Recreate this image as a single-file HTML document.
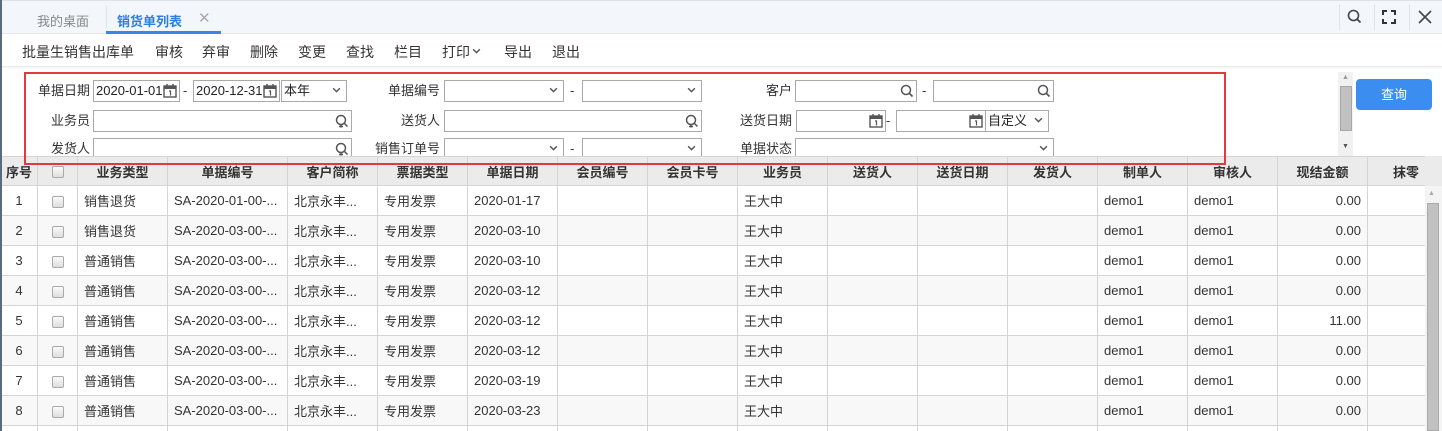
<!DOCTYPE html>
<html><head><meta charset="utf-8"><style>
*{box-sizing:border-box;margin:0;padding:0}
html{width:1442px;height:431px;overflow:hidden}
body{width:1442px;height:431px;overflow:hidden;background:#fff;font-family:"Liberation Sans","Noto Sans CJK SC",sans-serif;font-size:13px;color:#333;position:relative}
.a{position:absolute}
.tabbar{left:0;top:0;width:1442px;height:34px;background:#f3f6fa;border-top:1px solid #dfe3e8;border-bottom:1px solid #e3e6ea}
.tb span{position:absolute;top:42px;font-size:14px;color:#333}
.inp{position:absolute;height:22px;border:1px solid #a9a9a9;background:#fff;font-size:13px;line-height:20px;padding-left:2px;color:#222}
.lbl{position:absolute;font-size:13px;color:#333;text-align:right;line-height:22px}
.dash{position:absolute;font-size:13px;line-height:22px}
.chev{position:absolute;right:5px;top:6px}
.ic{position:absolute;right:2px;top:3px}
.tw{position:absolute;left:0;top:156px;width:1425px;height:275px;overflow:hidden}
table{border-collapse:collapse;table-layout:fixed;width:1425px}
td,th{border:1px solid #d4d4d4;height:30px;font-size:13px;white-space:nowrap;overflow:hidden;padding:0 6px}
th{background:#ebebeb;font-weight:bold;text-align:center;height:29px}
tr:nth-child(odd) td{background:#f8f8f8}
.cb{display:inline-block;width:12px;height:12px;border:1px solid #aaa;border-radius:2px;background:linear-gradient(#fafafa,#ddd);vertical-align:middle}
</style></head><body>
<svg width="0" height="0" style="position:absolute"><defs>
<symbol id="cal" viewBox="0 0 14 14"><rect x="1" y="2" width="12" height="11" fill="none" stroke="#555" stroke-width="1.4"/><rect x="1" y="2" width="12" height="3" fill="#555"/><path d="M4 0v3M10 0v3" stroke="#555" stroke-width="1.4"/><path d="M6 7h1.5v4.5" fill="none" stroke="#555" stroke-width="1.2"/></symbol>
<symbol id="srch" viewBox="0 0 14 14"><circle cx="6" cy="6" r="4.5" fill="none" stroke="#555" stroke-width="1.5"/><path d="M9.5 9.5l3 3" stroke="#555" stroke-width="1.6"/></symbol>
<symbol id="usr" viewBox="0 0 14 14"><circle cx="6" cy="6" r="4.5" fill="none" stroke="#555" stroke-width="1.5"/><path d="M6 10.5v3M4 12.5h4M9.5 9.5l3 3" stroke="#555" stroke-width="1.5"/></symbol>
<symbol id="chv" viewBox="0 0 8 6"><path d="M1 1l3 3 3-3" fill="none" stroke="#555" stroke-width="1.3"/></symbol>
</defs></svg>
<div class="a" style="left:0;top:0;width:2px;height:431px;background:#5a6b80;z-index:5"></div>
<div class="a tabbar"></div>
<div class="a" style="left:37px;top:11px;font-size:13px;color:#888">我的桌面</div>
<div class="a" style="left:106px;top:6px;width:1px;height:22px;background:#e0e0e0"></div>
<div class="a" style="left:117px;top:11px;font-size:13px;color:#2d7ce0;font-weight:bold">销货单列表</div>
<div class="a" style="left:198px;top:9px;font-size:15px;color:#aaa">✕</div>
<div class="a" style="left:106px;top:31px;width:115px;height:3px;background:#3a86e8"></div>
<div class="a" style="left:1339px;top:4px;width:1px;height:26px;background:#e3e3e3"></div>
<div class="a" style="left:1374px;top:4px;width:1px;height:26px;background:#e3e3e3"></div>
<div class="a" style="left:1409px;top:4px;width:1px;height:26px;background:#e3e3e3"></div>
<svg class="a" style="left:1346px;top:8px" width="18" height="18"><circle cx="7.5" cy="7.5" r="5" fill="none" stroke="#444" stroke-width="1.6"/><path d="M11 11l3.5 3.5" stroke="#444" stroke-width="1.8"/></svg>
<svg class="a" style="left:1382px;top:10px" width="14" height="14"><path d="M1 5V1h4M9 1h4v4M13 9v4H9M5 13H1V9" fill="none" stroke="#333" stroke-width="2"/></svg>
<svg class="a" style="left:1417px;top:9px" width="16" height="16"><path d="M2 2l12 12M14 2L2 14" stroke="#444" stroke-width="1.6"/></svg>
<div class="tb">
<span style="left:22px;top:42px">批量生销售出库单</span><span style="left:155px">审核</span><span style="left:202px">弃审</span><span style="left:250px">删除</span><span style="left:298px">变更</span><span style="left:346px">查找</span><span style="left:394px">栏目</span><span style="left:442px">打印<svg width="9" height="7" style="margin-left:2px;vertical-align:2px"><use href="#chv"/></svg></span><span style="left:504px">导出</span><span style="left:552px">退出</span>
</div>
<div class="a" style="left:0;top:66px;width:1442px;height:3px;background:linear-gradient(#e8e8e8,#fff)"></div>

<div class="lbl" style="left:20px;top:80px;width:70px">单据日期</div>
<div class="inp" style="left:93px;top:80px;width:87px">2020-01-01<svg class="ic" width="14" height="14"><use href="#cal"/></svg></div>
<div class="dash" style="left:183px;top:80px">-</div>
<div class="inp" style="left:193px;top:80px;width:87px">2020-12-31<svg class="ic" width="14" height="14"><use href="#cal"/></svg></div>
<div class="inp" style="left:281px;top:80px;width:66px">本年<svg class="chev" width="9" height="7"><use href="#chv"/></svg></div>
<div class="lbl" style="left:370px;top:80px;width:70px">单据编号</div>
<div class="inp" style="left:444px;top:80px;width:120px"><svg class="chev" width="9" height="7"><use href="#chv"/></svg></div>
<div class="dash" style="left:570px;top:80px">-</div>
<div class="inp" style="left:582px;top:80px;width:120px"><svg class="chev" width="9" height="7"><use href="#chv"/></svg></div>
<div class="lbl" style="left:720px;top:80px;width:72px">客户</div>
<div class="inp" style="left:795px;top:80px;width:122px"><svg class="ic" width="14" height="14"><use href="#srch"/></svg></div>
<div class="dash" style="left:922px;top:80px">-</div>
<div class="inp" style="left:933px;top:80px;width:121px"><svg class="ic" width="14" height="14"><use href="#srch"/></svg></div>

<div class="lbl" style="left:20px;top:110px;width:70px">业务员</div>
<div class="inp" style="left:93px;top:110px;width:259px"><svg class="ic" width="14" height="14"><use href="#usr"/></svg></div>
<div class="lbl" style="left:370px;top:110px;width:70px">送货人</div>
<div class="inp" style="left:444px;top:110px;width:258px"><svg class="ic" width="14" height="14"><use href="#usr"/></svg></div>
<div class="lbl" style="left:720px;top:110px;width:72px">送货日期</div>
<div class="inp" style="left:796px;top:110px;width:90px"><svg class="ic" width="14" height="14"><use href="#cal"/></svg></div>
<div class="dash" style="left:886px;top:110px">-</div>
<div class="inp" style="left:896px;top:110px;width:90px"><svg class="ic" width="14" height="14"><use href="#cal"/></svg></div>
<div class="inp" style="left:985px;top:110px;width:64px">自定义<svg class="chev" width="9" height="7"><use href="#chv"/></svg></div>

<div class="lbl" style="left:20px;top:138px;width:70px">发货人</div>
<div class="inp" style="left:93px;top:138px;width:259px"><svg class="ic" width="14" height="14"><use href="#usr"/></svg></div>
<div class="lbl" style="left:360px;top:138px;width:80px">销售订单号</div>
<div class="inp" style="left:444px;top:138px;width:120px"><svg class="chev" width="9" height="7"><use href="#chv"/></svg></div>
<div class="dash" style="left:570px;top:138px">-</div>
<div class="inp" style="left:582px;top:138px;width:120px"><svg class="chev" width="9" height="7"><use href="#chv"/></svg></div>
<div class="lbl" style="left:720px;top:138px;width:72px">单据状态</div>
<div class="inp" style="left:795px;top:138px;width:259px"><svg class="chev" width="9" height="7"><use href="#chv"/></svg></div>

<div class="a" style="left:1338px;top:72px;width:15px;height:84px;background:#f1f1f1"></div>
<div class="a" style="left:1340px;top:86px;width:12px;height:45px;background:#c1c1c1;border:1px solid #a8a8a8"></div>
<div class="a" style="left:1342px;top:74px;font-size:7px;color:#999">▲</div>
<div class="a" style="left:1342px;top:143px;font-size:7px;color:#555">▼</div>
<div class="a" style="left:1356px;top:79px;width:76px;height:31px;background:#3b8ef0;border-radius:4px;color:#fff;text-align:center;line-height:31px;font-size:13px">查询</div>

<div class="tw"><table>
<colgroup><col style="width:37px"><col style="width:40px"><col style="width:90px"><col style="width:120px"><col style="width:90px"><col style="width:90px"><col style="width:90px"><col style="width:90px"><col style="width:90px"><col style="width:90px"><col style="width:90px"><col style="width:90px"><col style="width:90px"><col style="width:90px"><col style="width:90px"><col style="width:90px"><col style="width:58px"></colgroup>
<tr><th style="padding:0">序号</th><th><span class="cb"></span></th><th>业务类型</th><th>单据编号</th><th>客户简称</th><th>票据类型</th><th>单据日期</th><th>会员编号</th><th>会员卡号</th><th>业务员</th><th>送货人</th><th>送货日期</th><th>发货人</th><th>制单人</th><th>审核人</th><th>现结金额</th><th style="text-align:right">抹零</th></tr>
<tr><td style="text-align:center">1</td><td style="text-align:center"><span class="cb"></span></td><td>销售退货</td><td>SA-2020-01-00-...</td><td>北京永丰...</td><td>专用发票</td><td>2020-01-17</td><td></td><td></td><td>王大中</td><td></td><td></td><td></td><td>demo1</td><td>demo1</td><td style="text-align:right">0.00</td><td></td></tr>
<tr><td style="text-align:center">2</td><td style="text-align:center"><span class="cb"></span></td><td>销售退货</td><td>SA-2020-03-00-...</td><td>北京永丰...</td><td>专用发票</td><td>2020-03-10</td><td></td><td></td><td>王大中</td><td></td><td></td><td></td><td>demo1</td><td>demo1</td><td style="text-align:right">0.00</td><td></td></tr>
<tr><td style="text-align:center">3</td><td style="text-align:center"><span class="cb"></span></td><td>普通销售</td><td>SA-2020-03-00-...</td><td>北京永丰...</td><td>专用发票</td><td>2020-03-10</td><td></td><td></td><td>王大中</td><td></td><td></td><td></td><td>demo1</td><td>demo1</td><td style="text-align:right">0.00</td><td></td></tr>
<tr><td style="text-align:center">4</td><td style="text-align:center"><span class="cb"></span></td><td>普通销售</td><td>SA-2020-03-00-...</td><td>北京永丰...</td><td>专用发票</td><td>2020-03-12</td><td></td><td></td><td>王大中</td><td></td><td></td><td></td><td>demo1</td><td>demo1</td><td style="text-align:right">0.00</td><td></td></tr>
<tr><td style="text-align:center">5</td><td style="text-align:center"><span class="cb"></span></td><td>普通销售</td><td>SA-2020-03-00-...</td><td>北京永丰...</td><td>专用发票</td><td>2020-03-12</td><td></td><td></td><td>王大中</td><td></td><td></td><td></td><td>demo1</td><td>demo1</td><td style="text-align:right">11.00</td><td></td></tr>
<tr><td style="text-align:center">6</td><td style="text-align:center"><span class="cb"></span></td><td>普通销售</td><td>SA-2020-03-00-...</td><td>北京永丰...</td><td>专用发票</td><td>2020-03-12</td><td></td><td></td><td>王大中</td><td></td><td></td><td></td><td>demo1</td><td>demo1</td><td style="text-align:right">0.00</td><td></td></tr>
<tr><td style="text-align:center">7</td><td style="text-align:center"><span class="cb"></span></td><td>普通销售</td><td>SA-2020-03-00-...</td><td>北京永丰...</td><td>专用发票</td><td>2020-03-19</td><td></td><td></td><td>王大中</td><td></td><td></td><td></td><td>demo1</td><td>demo1</td><td style="text-align:right">0.00</td><td></td></tr>
<tr><td style="text-align:center">8</td><td style="text-align:center"><span class="cb"></span></td><td>普通销售</td><td>SA-2020-03-00-...</td><td>北京永丰...</td><td>专用发票</td><td>2020-03-23</td><td></td><td></td><td>王大中</td><td></td><td></td><td></td><td>demo1</td><td>demo1</td><td style="text-align:right">0.00</td><td></td></tr>
<tr><td></td><td></td><td></td><td></td><td></td><td></td><td></td><td></td><td></td><td></td><td></td><td></td><td></td><td></td><td></td><td></td><td></td></tr>
</table></div>
<div class="a" style="left:1425px;top:156px;width:17px;height:275px;background:#ebebeb"></div>
<div class="a" style="left:1425px;top:186px;width:17px;height:245px;background:#f4f4f4"></div>
<div class="a" style="left:1428px;top:190px;font-size:7px;color:#aaa">▲</div>
<div class="a" style="left:1427px;top:203px;width:12px;height:228px;background:#c1c1c1;border:1px solid #aaa"></div>

<div class="a" style="left:24px;top:72px;width:1202px;height:93px;border:2px solid #e0393e;z-index:6"></div>
</body></html>
